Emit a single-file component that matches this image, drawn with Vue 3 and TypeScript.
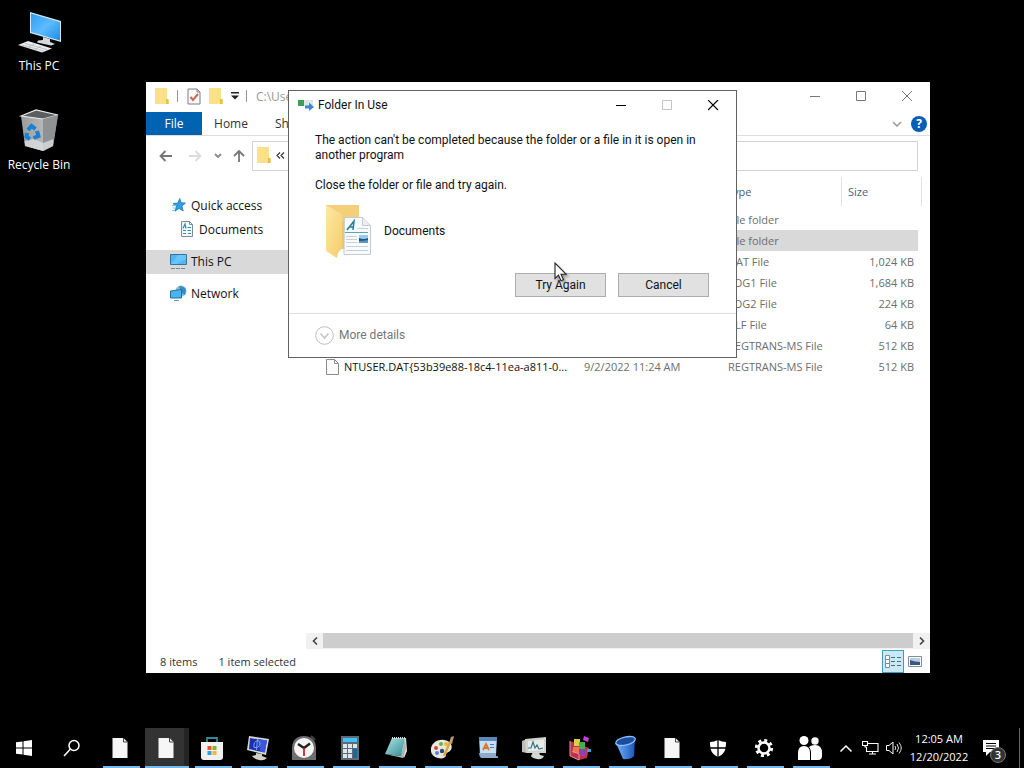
<script setup lang="ts">
import { ref } from 'vue'

interface FileRow {
  name: string
  date: string
  type: string
  size: string
  selected?: boolean
}

const files: FileRow[] = [
  { name: '', date: '', type: 'File folder', size: '' },
  { name: '', date: '', type: 'File folder', size: '', selected: true },
  { name: '', date: '', type: 'DAT File', size: '1,024 KB' },
  { name: '', date: '', type: 'LOG1 File', size: '1,684 KB' },
  { name: '', date: '', type: 'LOG2 File', size: '224 KB' },
  { name: '', date: '', type: 'BLF File', size: '64 KB' },
  { name: '', date: '', type: 'REGTRANS-MS File', size: '512 KB' },
  {
    name: 'NTUSER.DAT{53b39e88-18c4-11ea-a811-0...',
    date: '9/2/2022 11:24 AM',
    type: 'REGTRANS-MS File',
    size: '512 KB',
  },
]

const apps: string[] = [
  'file', 'file', 'store', 'display', 'clock', 'calc', 'notebook', 'paint',
  'wordpad', 'monitor', 'registry', 'bin', 'file', 'shield', 'gear', 'people',
]
const activeApp = ref(1)
const address = ref('')
</script>

<template>
  <div class="screen">
    <main class="desktop">
      <div class="shortcuts">
        <button class="shortcut">
          <svg width="46" height="44" viewBox="0 0 46 44" aria-hidden="true">
            <defs>
              <linearGradient id="screenBlue" x1="0" y1="0" x2="1" y2="1">
                <stop offset="0" stop-color="#2f9df0" /><stop offset=".5" stop-color="#5cbcff" /><stop offset="1" stop-color="#1c8be6" />
              </linearGradient>
            </defs>
            <path d="M14 3 45 12V33L14 24Z" fill="#d5eaf7" />
            <path d="M15 4.500 44 13V31.500L15 23Z" fill="url(#screenBlue)" />
            <path d="M27 28l7 2v3l5 2-4 1.500-14-3 1-2 5-.5Z" fill="#d4dade" />
            <path d="M2 36 12 32 36 39.500 26 43.500Z" fill="#e9edef" />
            <path d="M6 36l22 6M9 34.500l22 6M12 38.500l6-3.500M19 40.500l6-3.500" stroke="#a9b0b5" stroke-width=".7" />
          </svg>
          <span>This PC</span>
        </button>
        <button class="shortcut">
          <svg width="46" height="44" viewBox="0 0 46 44" aria-hidden="true">
            <defs>
              <linearGradient id="binBody" x1="0" y1="0" x2="1" y2="0">
                <stop offset="0" stop-color="#999c9e" /><stop offset=".6" stop-color="#b5b7b8" /><stop offset="1" stop-color="#7c7f81" />
              </linearGradient>
            </defs>
            <path d="M5 8 20 2 42 7 37 38 27 43 9 38Z" fill="url(#binBody)" />
            <path d="M5 8 20 2 42 7 27 11Z" fill="#5c5d5e" stroke="#e8e8e8" stroke-width="1.200" />
            <path d="M27 11 42 7 37 38 27 43Z" fill="#8f9192" />
            <path d="M8.500 33 18 31 27 35 37.500 31 37 38 27 43 9 38Z" fill="#dfe2e3" opacity=".75" />
            <g fill="none" stroke="#1981d2" stroke-width="4">
              <path d="M12 22l3.500-4 4 3" /><path d="M21 23l1.500 5-5 2" /><path d="M14 31l-3.500-2 .5-4" />
            </g>
          </svg>
          <span>Recycle Bin</span>
        </button>
      </div>

      <section class="explorer" aria-label="File Explorer">
        <header class="titlebar">
          <div class="quickbar">
            <svg width="16" height="18" viewBox="0 0 16 18" aria-hidden="true"><path d="M1 1h12v12h2v4H1Z" fill="#fbe08a" /><path d="M12 12v5h2.500v-5Z" fill="#e6bf52" /></svg>
            <i class="rule"></i>
            <button aria-label="Properties">
              <svg width="14" height="17" viewBox="0 0 14 17"><path d="M1 1h9l3 3v12H1Z" fill="#fafafc" stroke="#7d7d86" /><path d="M10 1v3h3" fill="none" stroke="#7d7d86" /><path d="M3.500 9l2.500 3 5-6" fill="none" stroke="#c9694f" stroke-width="2" /></svg>
            </button>
            <button aria-label="New folder">
              <svg width="16" height="18" viewBox="0 0 16 18"><path d="M1 1h12v12h2v4H1Z" fill="#fbe08a" /><path d="M12 12v5h2.500v-5Z" fill="#e6bf52" /></svg>
            </button>
            <button aria-label="Customize toolbar">
              <svg width="8" height="8" viewBox="0 0 8 8"><path d="M0 0h8v1.500H0ZM0 3.500h8L4 7.500Z" fill="#222" /></svg>
            </button>
            <i class="rule"></i>
            <span class="path">C:\Users</span>
          </div>
          <div class="winbtns">
            <button aria-label="Minimize"><svg width="11" height="11"><path d="M0 5.500h10" stroke="#777" /></svg></button>
            <button aria-label="Maximize"><svg width="11" height="11"><path d="M.5 .5h9v9h-9Z" fill="none" stroke="#777" /></svg></button>
            <button aria-label="Close"><svg width="11" height="11"><path d="M0 0 10 10M10 0 0 10" stroke="#777" /></svg></button>
          </div>
        </header>

        <nav class="ribbon" aria-label="Ribbon">
          <button class="tab file">File</button>
          <button class="tab">Home</button>
          <button class="tab">Share</button>
          <span class="grow"></span>
          <button class="expand" aria-label="Expand ribbon"><svg width="10" height="6"><path d="M1 1l4 4 4-4" fill="none" stroke="#999" stroke-width="1.500" /></svg></button>
          <button class="help" aria-label="Help">?</button>
        </nav>

        <div class="navbar">
          <button class="arrow" aria-label="Back"><svg width="14" height="12" viewBox="0 0 14 12"><path d="M13 6H2M6.500 1 1.500 6l5 5" fill="none" stroke="#777" stroke-width="1.800" /></svg></button>
          <button class="arrow" aria-label="Forward"><svg width="14" height="12" viewBox="0 0 14 12"><path d="M1 6h11M7.500 1l5 5-5 5" fill="none" stroke="#dcdcdc" stroke-width="1.800" /></svg></button>
          <button class="arrow small" aria-label="Recent"><svg width="8" height="6" viewBox="0 0 8 6"><path d="M1 1l3 3 3-3" fill="none" stroke="#888" stroke-width="1.800" /></svg></button>
          <button class="arrow up" aria-label="Up"><svg width="12" height="14" viewBox="0 0 12 14"><path d="M6 13V2M1 7l5-5 5 5" fill="none" stroke="#777" stroke-width="1.800" /></svg></button>
          <div class="address">
            <svg width="16" height="18" viewBox="0 0 16 18" aria-hidden="true"><path d="M1 1h12v12h2v4H1Z" fill="#fbe08a" /><path d="M12 12v5h2.500v-5Z" fill="#e6bf52" /></svg>
            <button class="crumb" aria-label="Parent folders">
              <svg width="9" height="7" viewBox="0 0 9 7"><path d="M4 .5 1 3.500l3 3M8 .5 5 3.500l3 3" fill="none" stroke="#333" stroke-width="1.200" /></svg>
            </button>
            <input v-model="address" aria-label="Address" />
          </div>
        </div>

        <div class="content">
          <nav class="tree" aria-label="Folders">
            <a href="#">
              <svg class="ticon" width="17" height="16" viewBox="0 0 17 16"><path d="M9.800 1.500l1.400 4.300 4.300.2-3.600 3 1.300 5-4.200-2.600L5 14.200l1.400-4.700L3 6.500l4.800-.4Z" fill="#2f9fe3" stroke="#1878bd" stroke-width=".8" /><path d="M2 8.500h4M2.500 11h3M2 13.500h3" stroke="#7cc2ee" /></svg>
              Quick access
            </a>
            <a href="#" class="sub">
              <svg class="ticon" width="17" height="16" viewBox="0 0 17 16"><path d="M3.500 .5h8l3 3v12h-11Z" fill="#f8fcff" stroke="#7b8c96" /><path d="M11.500 .5v3h3" fill="none" stroke="#7b8c96" /><path d="M5 7.500 7 3l1 4.500M5 9.500h3M9.500 6.500H13M9.500 9.500H13M5 12.500h3M10 12.500h3" fill="none" stroke="#308eab" stroke-width="1.200" /></svg>
              Documents
            </a>
            <a href="#" class="current">
              <svg class="ticon" width="17" height="16" viewBox="0 0 17 16"><path d="M.5 1.500h16v10H.5Z" fill="#4db6f5" stroke="#38749b" /><path d="M8 2h8v4L7 11H1Z" fill="#74cdff" opacity=".7" /><path d="M1 15.500h15" stroke="#758996" stroke-dasharray="4 1" /></svg>
              This PC
            </a>
            <a href="#">
              <svg class="ticon" width="17" height="16" viewBox="0 0 17 16"><circle cx="11" cy="6" r="5.500" fill="#8cbdd8" /><path d="M9 1q5 0 7 4l-1 5q-4-1-6-9Z" fill="#378bc0" /><path d="M.5 6 11.500 4.500v8.500L.5 13Z" fill="#49b4f0" stroke="#21709f" /><path d="M4 15.500h5" stroke="#6a98b3" /></svg>
              Network
            </a>
          </nav>

          <div class="pane">
            <table>
              <colgroup>
                <col /><col class="c-date" /><col class="c-type" /><col class="c-size" /><col class="c-end" />
              </colgroup>
              <thead>
                <tr><th></th><th></th><th>Type</th><th class="h-size">Size</th><th class="h-end"></th></tr>
              </thead>
              <tbody>
                <tr v-for="(f, i) in files" :key="i" :class="{ selected: f.selected }">
                  <td>
                    <div v-if="f.name" class="fname">
                      <svg width="13" height="16" viewBox="0 0 13 16"><path d="M.5 .5h8l4 4v11H.5Z" fill="#fbfbfb" stroke="#8b8b8b" /><path d="M8.500 .5v4h4" fill="none" stroke="#8b8b8b" /></svg>
                      <span>{{ f.name }}</span>
                    </div>
                  </td>
                  <td>{{ f.date }}</td>
                  <td>{{ f.type }}</td>
                  <td class="size">{{ f.size }}</td>
                  <td class="end"></td>
                </tr>
              </tbody>
            </table>
            <div class="scrollbar">
              <button aria-label="Scroll left"><svg width="6" height="8" viewBox="0 0 6 8"><path d="M5 .5 1.500 4 5 7.500" fill="none" stroke="#444" stroke-width="1.600" /></svg></button>
              <div class="thumb"></div>
              <button aria-label="Scroll right"><svg width="6" height="8" viewBox="0 0 6 8"><path d="M1 .5 4.500 4 1 7.500" fill="none" stroke="#444" stroke-width="1.600" /></svg></button>
            </div>
          </div>
        </div>

        <footer class="status">
          <span>8 items</span>
          <span class="picked">1 item selected</span>
          <span class="grow"></span>
          <button class="view on" aria-label="Details view">
            <svg width="16" height="13" viewBox="0 0 16 13"><path d="M.5 .5h4v12h-4ZM.5 4.500h4M.5 8.500h4" fill="#fff" stroke="#7c8f99" /><path d="M6 2.500h4M12 2.500h4M6 6.500h4M12 6.500h4M6 10.500h4M12 10.500h4" stroke="#566a75" /></svg>
          </button>
          <button class="view" aria-label="Large icons view">
            <svg width="14" height="11" viewBox="0 0 14 11"><path d="M.5 .5h13v10H.5Z" fill="#fff" stroke="#7e8e9d" /><path d="M2 2h10v7H2Z" fill="#b6d0e6" /><path d="M2 4q5 2 10 2v3H2Z" fill="#3b5a7d" /></svg>
          </button>
        </footer>
      </section>

      <section class="dialog" role="dialog" aria-labelledby="dlg-title">
        <header class="titlebar">
          <svg class="dlgicon" width="16" height="12" viewBox="0 0 16 12" aria-hidden="true"><path d="M0 1h15v6H0Z" fill="#dfe6e6" /><path d="M0 1h6v6H0Z" fill="#3d9e50" /><path d="M7 6.500h4V3.500l5 4.500-5 4V9.500H7Z" fill="#3f86d2" /></svg>
          <h1 id="dlg-title">Folder In Use</h1>
          <div class="winbtns">
            <button aria-label="Minimize"><svg width="11" height="11"><path d="M0 5.500h10" stroke="#000" /></svg></button>
            <button aria-label="Maximize" disabled><svg width="11" height="11"><path d="M.5 .5h9v9h-9Z" fill="none" stroke="#c4c4c4" /></svg></button>
            <button aria-label="Close"><svg width="11" height="11"><path d="M0 0 10 10M10 0 0 10" stroke="#000" stroke-width="1.200" /></svg></button>
          </div>
        </header>
        <div class="body">
          <p>The action can't be completed because the folder or a file in it is open in<br />another program</p>
          <p>Close the folder or file and try again.</p>
          <div class="item">
            <svg width="46" height="54" viewBox="0 0 46 54" aria-hidden="true">
              <defs>
                <linearGradient id="flap" x1="0" y1="0" x2="1" y2="1"><stop offset="0" stop-color="#ffe9a3" /><stop offset="1" stop-color="#f3cd6c" /></linearGradient>
              </defs>
              <path d="M0 1h33v16H18v28h-3Z" fill="#eec565" />
              <path d="M2 1h31v16H14Z" fill="#f2cf78" />
              <path d="M0 1 16 10V44L12 49 11 54 0 47Z" fill="url(#flap)" />
              <path d="M18.500 13.500h18l8 8v29h-26.500Z" fill="#f8fafc" stroke="#c5cbd2" />
              <path d="M36.500 13.500v8h8" fill="#e9edf1" stroke="#c5cbd2" />
              <path d="M21 26 28 17l-1 9M23.500 23h4" fill="none" stroke="#1b8197" stroke-width="1.500" />
              <path d="M19 28.500h23" stroke="#58a5b7" />
              <path d="M20 32.500h11M20 35.500h11M20 38.500h11M20 42.500h22M20 46.500h22M31 24.500h11" stroke="#c8d1d8" />
              <path d="M33 31h9v8h-9Z" fill="#9ecbed" /><path d="M33 34q5 2 9 0v5h-9Z" fill="#245589" /><path d="M33 37q4 0 9-1v3h-9Z" fill="#5d97c0" />
            </svg>
            <span>Documents</span>
          </div>
          <div class="actions">
            <button>Try Again</button>
            <button>Cancel</button>
          </div>
        </div>
        <footer class="more">
          <button disabled>
            <svg width="19" height="19" viewBox="0 0 19 19"><circle cx="9.500" cy="9.500" r="8.800" fill="#fff" stroke="#bdbdbd" /><path d="M5.500 7.500l4 4.500 4-4.500" fill="none" stroke="#c4c4c4" stroke-width="1.500" /></svg>
            More details
          </button>
        </footer>
      </section>

      <svg class="pointer" width="15" height="21" viewBox="0 0 15 21" aria-hidden="true"><path d="M1 1v15.500l3.500-3.300 2.500 5.600 2.500-1.100L7 12.200h5Z" fill="#fff" stroke="#222" stroke-width="1.100" /></svg>
    </main>

    <footer class="taskbar">
      <button class="start" aria-label="Start">
        <svg width="16" height="16" viewBox="0 0 16 16"><path d="M0 2.300 6.500 1.400v6.100H0ZM7.500 1.200 16 0v7.500H7.500ZM0 8.500h6.500v6.100L0 13.700ZM7.500 8.500H16V16l-8.500-1.200Z" fill="#fff" /></svg>
      </button>
      <button class="start" aria-label="Search">
        <svg width="18" height="18" viewBox="0 0 18 18"><circle cx="11" cy="6.500" r="5" fill="none" stroke="#fff" stroke-width="1.500" /><path d="M7.500 10 1 17" stroke="#fff" stroke-width="1.500" /></svg>
      </button>
      <button v-for="(app, i) in apps" :key="i" class="app" :class="{ active: i === activeApp }" :aria-label="app" @click="activeApp = i">
        <svg width="26" height="26" viewBox="0 0 26 26">
          <template v-if="app === 'file'">
            <path d="M5.500 3h11l4 4v16h-15Z" fill="#f6f6f6" /><path d="M16.500 3v4h4" fill="none" stroke="#444" />
          </template>
          <template v-else-if="app === 'store'">
            <path d="M8 7V3h10v4" fill="none" stroke="#2a8c9a" stroke-width="1.800" />
            <path d="M2 7h22v15q0 3-3 3H5q-3 0-3-3Z" fill="#f1f1f1" />
            <path d="M8.500 11h4v4h-4Z" fill="#ef5126" /><path d="M13.500 11h4v4h-4Z" fill="#7cb82f" /><path d="M8.500 16h4v4h-4Z" fill="#2b9fdf" /><path d="M13.500 16h4v4h-4Z" fill="#f7b52a" />
          </template>
          <template v-else-if="app === 'display'">
            <path d="M4 1 24 4 21 20 2 15Z" fill="#d9dad3" /><path d="M5 3 22 5.500 19.500 17.500 4 14Z" fill="#1b2fb5" /><path d="M13 4l9 1.500-2 12-5-1Z" fill="#3c57dd" />
            <path d="M13 5.500q-5 1-4 7 5 1 6-4 0-2-2-3ZM12.500 4l-1 11" fill="none" stroke="#7ea4f0" />
            <path d="M11 18l6 1v2l5 2q-3 3-8 2t-7-4l4-1Z" fill="#d2d2c9" />
          </template>
          <template v-else-if="app === 'clock'">
            <path d="M1 13C1 5 6 1 13 1s12 4 12 12v12H1Z" fill="#6e6e6e" /><path d="M20 1l4 4" stroke="#444" stroke-width="2" />
            <circle cx="13" cy="13" r="10" fill="#f5f5f5" /><path d="M7 9l6 4 6-4.500" fill="none" stroke="#222" stroke-width="2.400" /><path d="M13 13v8" stroke="#d0261e" stroke-width="1.800" />
          </template>
          <template v-else-if="app === 'calc'">
            <path d="M4 1h18v24H4Z" fill="#5c6c76" /><path d="M6 3h14v4H6Z" fill="#42c0f2" />
            <path d="M6 9h4v4H6ZM11 9h4v4h-4ZM16 9h4v4h-4ZM6 14h4v4H6ZM11 14h4v4h-4ZM6 19h4v4H6ZM11 19h4v4h-4Z" fill="#dfe5e9" /><path d="M16 14h4v9h-4Z" fill="#17699c" />
          </template>
          <template v-else-if="app === 'notebook'">
            <defs><linearGradient id="noteFill" x1="0" y1="0" x2="1" y2="1"><stop offset="0" stop-color="#b4e4e2" /><stop offset="1" stop-color="#2d8c94" /></linearGradient></defs>
            <path d="M9 3h14l1 13-3 7Z" fill="#e3e5df" /><path d="M9 3h13l-4 18L2 19Z" fill="url(#noteFill)" /><path d="M2 19l16 2 4-18 1 11-3 9Z" fill="#aeb6b0" /><path d="M9 3h14" stroke="#ddd" stroke-width="2" stroke-dasharray="1 1" />
          </template>
          <template v-else-if="app === 'paint'">
            <path d="M2 16C1 9 8 4 15 5s10 7 6 11c-2 2-4 1-4 4s-4 4-8 3-7-4-7-7Z" fill="#e9e8df" />
            <circle cx="7" cy="13" r="2" fill="#d9443c" /><circle cx="12" cy="9" r="2" fill="#67b344" /><circle cx="8" cy="18" r="2" fill="#5c83d6" /><circle cx="17" cy="9" r="2" fill="#f0b430" /><circle cx="13" cy="16" r="2.200" fill="#274a72" />
            <path d="M15 21 21 7" stroke="#e3a43e" stroke-width="2.400" /><path d="M20 8l2-6 3-1-2 8Z" fill="#bb9b75" />
          </template>
          <template v-else-if="app === 'wordpad'">
            <path d="M4 2h18l-1 18H5Z" fill="#b9d8f2" /><path d="M4 2h18v4H4Z" fill="#5a87b8" /><path d="M5 6h15v13H5Z" fill="#c7dff2" />
            <path d="M8 15l3-6 3 6M9 13h4" fill="none" stroke="#d9782a" stroke-width="1.800" /><path d="M15 9.500h4M15 12.500h4" stroke="#4a79c0" /><path d="M4 18h17v3q3 0 2 2H6q-2-2-2-5Z" fill="#8fabca" />
          </template>
          <template v-else-if="app === 'monitor'">
            <path d="M1 6l5-2v14l-5-1Z" fill="#bcbeb8" /><path d="M4 4 25 2v16L5 18Z" fill="#cfd2cd" /><path d="M7 6 23 4.500v11L7 16Z" fill="#e6ede8" />
            <path d="M7 13h3l2-6 2 6 2-3 2 4 4-1" fill="none" stroke="#3a7684" stroke-width="1.200" /><path d="M12 17h6l1 3 4 1q-2 4-7 3t-6-3Z" fill="#d6d7d0" />
          </template>
          <template v-else-if="app === 'registry'">
            <path d="M3 6l9 3 10 4-2 10-8 2-9-4Z" fill="#b9334a" /><path d="M7 4h6v7H7Z" fill="#d6d146" /><path d="M12 7h6v7h-6Z" fill="#3fae55" /><path d="M6 12h6v6H6Z" fill="#e77a4d" /><path d="M13 14h6v7h-6Z" fill="#8c43b2" /><path d="M17 1l5 2-1 4-5-2Z" fill="#c43fe0" /><path d="M20 14h4v3h-4Z" fill="#38a4e0" /><path d="M3 6v15l9 4V19L5 16" fill="none" stroke="#f08a9a" />
          </template>
          <template v-else-if="app === 'bin'">
            <defs><linearGradient id="blueBin"><stop offset="0" stop-color="#71b4ff" /><stop offset="1" stop-color="#1c55b7" /></linearGradient></defs>
            <path d="M3 8 22 4 21 21q-4 4-11 3Z" fill="url(#blueBin)" /><ellipse cx="12.500" cy="6" rx="10" ry="4" transform="rotate(-13 12.500 6)" fill="#1c4d9c" stroke="#88c0ff" stroke-width="1.300" />
          </template>
          <template v-else-if="app === 'shield'">
            <path d="M13 5q4 2 8 2c0 9-2 12-8 15-6-3-8-6-8-15q4 0 8-2Z" fill="#fff" /><path d="M13 5v17M5 13h16" stroke="#000" stroke-width="1.300" />
          </template>
          <template v-else-if="app === 'gear'">
            <circle cx="13" cy="13" r="5.500" fill="none" stroke="#fff" stroke-width="2.500" />
            <circle cx="13" cy="13" r="7.700" fill="none" stroke="#fff" stroke-width="2.800" stroke-dasharray="3 3.048" />
          </template>
          <template v-else>
            <circle cx="7" cy="5.500" r="4.500" fill="#fff" /><circle cx="18" cy="6" r="3.700" fill="#fff" />
            <path d="M1 25v-7q0-7 6-7t6 7v7Z" fill="#fff" /><path d="M14 25v-8q0-3-2-5 2-2 6-2 7 0 7 8v3q0 4-4 4Z" fill="#fff" />
          </template>
        </svg>
      </button>
      <span class="grow"></span>
      <button class="tray" aria-label="Show hidden icons"><svg width="14" height="9" viewBox="0 0 14 9"><path d="M1.500 7.500 7 2l5.500 5.500" fill="none" stroke="#fff" stroke-width="1.500" /></svg></button>
      <button class="tray" aria-label="Network"><svg width="17" height="14" viewBox="0 0 17 14"><path d="M6 2.500h10v8H4.500V6M10.500 10.500v3M7 13h7M.5 .5h5v4h-5ZM3 4.500V6h1.500" fill="none" stroke="#fff" stroke-width="1.100" /></svg></button>
      <button class="tray" aria-label="Volume"><svg width="17" height="14" viewBox="0 0 17 14"><path d="M.5 4.500h2.500l4-3.500v12L3 9.500H.5Z" fill="none" stroke="#fff" /><path d="M9 5q1.500 2 0 4M11 3q3 4 0 8M13 1.500q4.500 5.500 0 11" fill="none" stroke="#ddd" /></svg></button>
      <button class="clock"><span>12:05 AM</span><span>12/20/2022</span></button>
      <button class="notes" aria-label="Notifications">
        <svg width="18" height="16" viewBox="0 0 18 16"><path d="M1 0h16v12H8l-4 4v-4H1Z" fill="#fff" /><path d="M4 3.500h10M4 6h10M4 8.500h10" stroke="#000" /></svg>
        <b>3</b>
      </button>
      <button class="peek" aria-label="Show desktop"></button>
    </footer>
  </div>
</template>

<style>
html,
body {
  margin: 0;
  background: #000;
}
</style>

<style scoped>
.screen {
  display: flex;
  flex-direction: column;
  height: 100vh;
  background: #000;
  color: #111;
  font-family: "Open Sans", "Noto Sans", sans-serif;
  font-size: 12px;
  line-height: 15px;
  overflow: hidden;
}
.screen * {
  box-sizing: border-box;
}
svg {
  display: block;
  flex: none;
}
button {
  margin: 0;
  padding: 0;
  border: 0;
  background: none;
  color: inherit;
  font: inherit;
}
.grow {
  flex: 1;
}
.desktop {
  position: relative;
  flex: 1;
}
.shortcuts {
  display: flex;
  flex-direction: column;
  gap: 24px;
  width: 78px;
  padding-top: 9px;
}
.shortcut {
  display: flex;
  flex-direction: column;
  align-items: center;
  gap: 5px;
  height: 75px;
  color: #fff;
  white-space: nowrap;
}

.explorer {
  position: absolute;
  top: 82px;
  right: 94px;
  bottom: 55px;
  left: 146px;
  display: flex;
  flex-direction: column;
  background: #fff;
}
.titlebar {
  display: flex;
  align-items: center;
  justify-content: space-between;
  height: 30px;
  padding-bottom: 2px;
}
.quickbar {
  display: flex;
  align-items: center;
  gap: 7px;
  padding-left: 8px;
}
.rule {
  width: 1px;
  height: 12px;
  margin-right: 2px;
  background: #999;
}
.path {
  color: #999;
}
.winbtns {
  display: flex;
  height: 100%;
}
.winbtns button {
  display: grid;
  place-items: center;
  width: 46px;
}
.ribbon {
  display: flex;
  align-items: center;
  height: 24px;
  padding-right: 3px;
  border-bottom: 1px solid #dcdde0;
}
.tab {
  width: 58px;
  height: 23px;
  color: #333;
}
.tab.file {
  width: 56px;
  background: #0063b1;
  color: #fff;
}
.tab:nth-child(3) {
  width: 62px;
}
.expand {
  padding: 0 9px;
}
.help {
  width: 16px;
  height: 16px;
  border-radius: 50%;
  background: #0a5db5;
  color: #fff;
  font-weight: 700;
}
.navbar {
  display: flex;
  align-items: center;
  height: 40px;
  padding: 0 12px;
}
.arrow {
  display: grid;
  place-items: center;
  width: 15px;
  height: 24px;
  margin-right: 14px;
}
.arrow.small {
  width: 9px;
  margin-left: -3px;
  margin-right: 9px;
}
.arrow.up {
  margin-right: 6px;
}
.address {
  display: flex;
  flex: 1;
  align-items: center;
  gap: 4px;
  height: 30px;
  padding-left: 3px;
  border: 1px solid #d0d2d6;
}
.address svg {
  margin-bottom: 2px;
}
.address input {
  flex: 1;
  min-width: 0;
  border: 0;
  outline: 0;
  background: none;
  font: inherit;
}
.content {
  display: flex;
  flex: 1;
  min-height: 0;
}
.tree {
  display: flex;
  flex: none;
  flex-direction: column;
  width: 160px;
  padding-top: 18px;
}
.tree a {
  display: flex;
  align-items: center;
  gap: 4px;
  height: 24px;
  margin-bottom: 8px;
  padding: 0 0 2px 24px;
  color: #111;
  text-decoration: none;
}
.tree a:first-child {
  margin-bottom: 0;
}
.tree .sub {
  padding-left: 32px;
}
.tree .current {
  background: #d9d9d9;
}
.pane {
  display: flex;
  flex: 1;
  flex-direction: column;
  justify-content: space-between;
  min-width: 0;
}
table {
  width: calc(100% - 22px);
  margin: 1px 8px 0 14px;
  border-collapse: separate;
  border-spacing: 0;
  table-layout: fixed;
  color: #6d6d6d;
  font-size: 11px;
}
.c-date {
  width: 144px;
}
.c-type {
  width: 120px;
}
.c-size {
  width: 77px;
}
.c-end {
  width: 4px;
}
th {
  height: 29px;
  padding: 0 6px;
  color: #4c607a;
  font-weight: 400;
  text-align: left;
}
.h-size {
  border-left: 1px solid #e2e2e2;
}
.h-end {
  padding: 0;
  border-right: 1px solid #e2e2e2;
}
tbody::before {
  content: "";
  display: block;
  height: 3px;
}
td {
  height: 21px;
  padding: 0 0 0 7px;
  white-space: nowrap;
}
td:first-child {
  padding-left: 6px;
}
td.size {
  padding-right: 4px;
  text-align: right;
}
td.end {
  padding: 0;
}
.selected td:not(.end) {
  background: #d9d9d9;
}
.fname {
  display: flex;
  align-items: center;
  gap: 5px;
  color: #111;
}
.scrollbar {
  display: flex;
  height: 16px;
  background: #f1f1f1;
}
.scrollbar button {
  display: grid;
  place-items: center;
  width: 17px;
}
.scrollbar .thumb {
  flex: 1;
  height: 15px;
  background: #cdcdcd;
}
.status {
  display: flex;
  align-items: center;
  height: 24px;
  padding: 0 4px 0 14px;
  color: #333;
  font-size: 11px;
}
.picked {
  margin-left: 21px;
}
.view {
  display: grid;
  place-items: center;
  width: 22px;
  height: 23px;
}
.view.on {
  border: 1px solid #3da0b8;
  background: #c9e9f7;
}

.dialog {
  position: absolute;
  top: 90px;
  left: 288px;
  width: 449px;
  border: 1px solid #626262;
  background: #fff;
  font-family: Roboto, "Open Sans", sans-serif;
}
.dlgicon {
  margin: 0 4px 0 9px;
}
h1 {
  flex: 1;
  margin: 0;
  font-size: 12px;
  font-weight: 400;
}
.body {
  padding: 12px 27px 16px 26px;
}
p {
  margin: 0 0 15px;
  white-space: nowrap;
}
.item {
  display: flex;
  align-items: center;
  gap: 12px;
  margin: -4px 0 15px 11px;
}
.actions {
  display: flex;
  justify-content: flex-end;
  gap: 12px;
}
.actions button {
  width: 91px;
  height: 24px;
  border: 1px solid #adadad;
  background: #e1e1e1;
}
.more {
  display: flex;
  align-items: center;
  height: 44px;
  padding-left: 26px;
  border-top: 1px solid #dfdfdf;
}
.more button {
  display: flex;
  align-items: center;
  gap: 5px;
  color: #777;
}
.pointer {
  position: absolute;
  top: 262px;
  left: 554px;
  filter: drop-shadow(2px 2px 1px rgba(0, 0, 0, 0.3));
}

.taskbar {
  display: flex;
  height: 40px;
  color: #fff;
}
.taskbar button {
  display: flex;
  flex: none;
  align-items: center;
  justify-content: center;
}
.taskbar .start {
  width: 48px;
}
.taskbar .app {
  position: relative;
  width: 46px;
}
.start + .app {
  margin-left: 1px;
}
.app::after {
  content: "";
  position: absolute;
  right: 3px;
  bottom: 0;
  left: 6px;
  height: 2px;
  background: #76b9ed;
}
.taskbar .active {
  background: linear-gradient(90deg, #000 2px, #333 2px, #333 41px, #252525 41px);
}
.taskbar .active::after {
  right: 0;
  left: 2px;
}
.taskbar .tray {
  width: 24px;
}
.taskbar .clock {
  flex-direction: column;
  gap: 3px;
  width: 66px;
  padding-bottom: 2px;
  font-size: 11px;
}
.taskbar .notes {
  position: relative;
  justify-content: flex-start;
  width: 47px;
  padding-left: 10px;
}
.notes b {
  position: absolute;
  right: 13px;
  bottom: 5px;
  width: 16px;
  height: 16px;
  border: 1px solid #777;
  border-radius: 50%;
  background: #333;
  font-size: 11px;
  font-weight: 600;
  line-height: 14px;
}
.taskbar .peek {
  width: 5px;
  border-left: 1px solid #666;
}
</style>
